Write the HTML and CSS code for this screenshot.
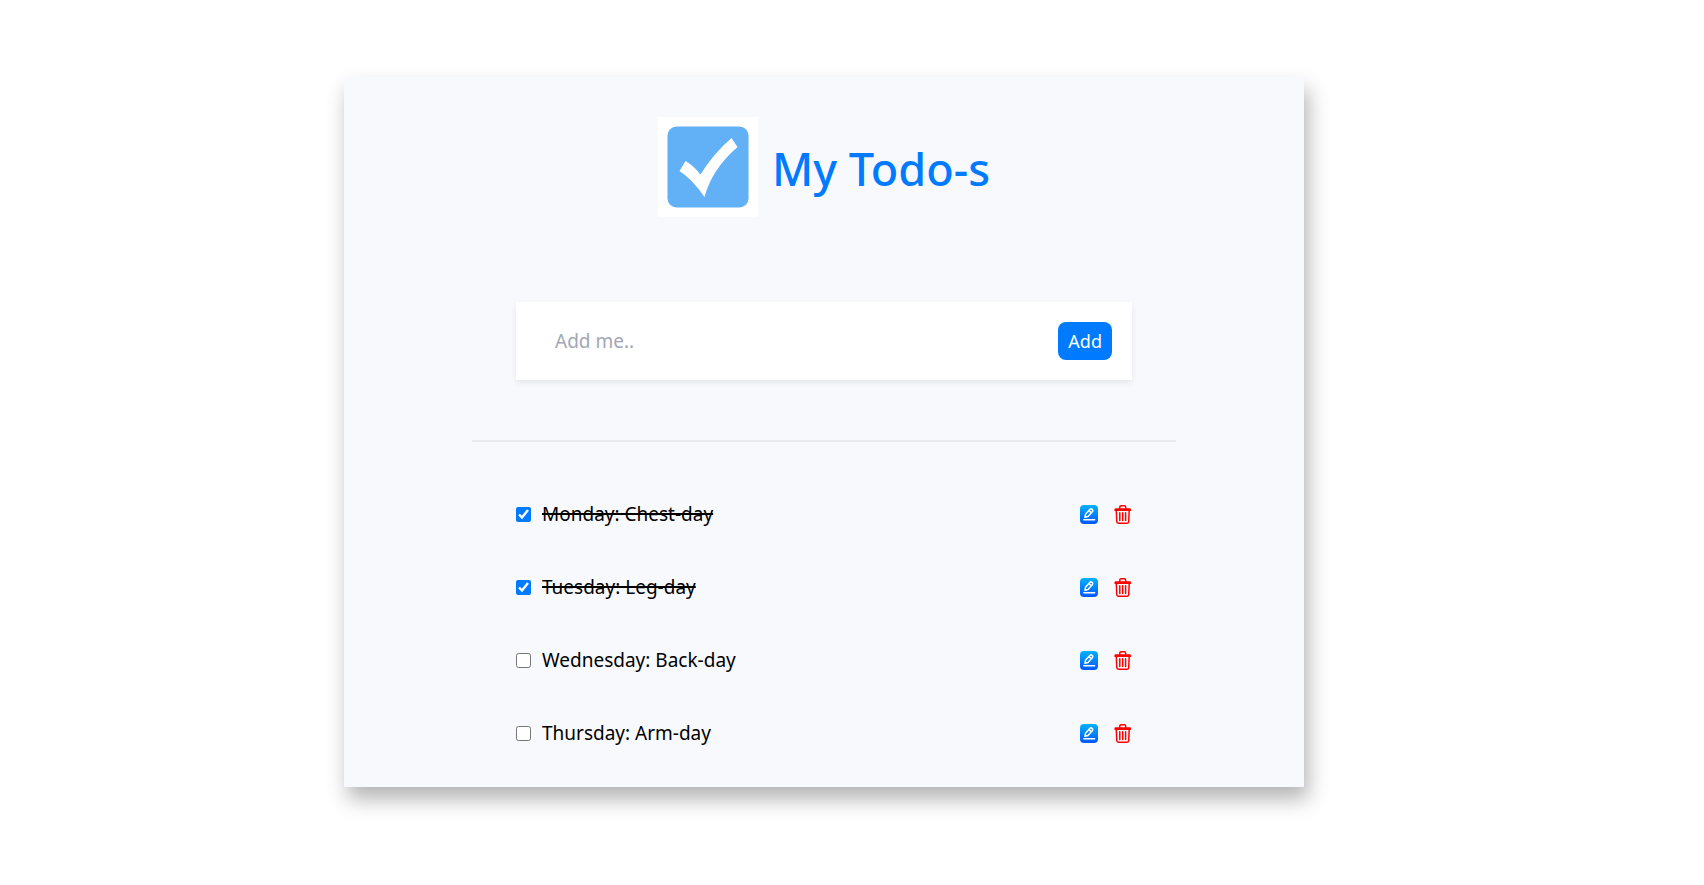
FILE: index.html
```html
<!DOCTYPE html>
<html lang="en">
<head>
<meta charset="utf-8">
<title>My Todo-s</title>
<link rel="stylesheet" href="styles.css">
</head>
<body>
<svg class="defs" width="0" height="0" aria-hidden="true">
  <defs>
    <linearGradient id="blue" x1="0" y1="0" x2="0" y2="1"><stop offset="0" stop-color="#00b2ff"/><stop offset="1" stop-color="#0057ff"/></linearGradient>
    <symbol id="edit" viewBox="0 0 18 19">
      <rect width="18" height="19" rx="4" fill="url(#blue)"/>
      <path d="M3.800 14.800h10.800" stroke="#fff" stroke-width="1.500" stroke-linecap="round"/>
      <path d="M4.900 12.300l.6-3L10 4.300q.9-.9 2.100.1 1.200 1 .4 2.100L8 11.600zM9 5.600l2.300 2.100" fill="none" stroke="#fff" stroke-width="1.500" stroke-linejoin="round"/>
    </symbol>
    <symbol id="trash" viewBox="0 0 18 19">
      <path d="M1.300 3.200q-.8.200-.8 1.400v1.400h16.500V4.600q0-1.200-.8-1.400z" fill="#f00"/>
      <path d="M5.800 3.500V2.200q0-1.400 1.400-1.400h3.100q1.400 0 1.400 1.400v1.300M2.300 5.500l.5 11.300q.1 1.400 1.500 1.400h8.900q1.400 0 1.500-1.400l.5-11.300M5.800 7.700v7.900M8.700 7.700v7.900M11.600 7.700v7.900" fill="none" stroke="#f00" stroke-width="1.500" stroke-linecap="round"/>
    </symbol>
  </defs>
</svg>
<main class="card">
  <header class="header">
    <svg class="logo" viewBox="0 0 100 100" aria-hidden="true">
      <rect width="100" height="100" fill="#fff"/>
      <rect x="9.500" y="9.500" width="81" height="81" rx="9" fill="#62b0f6"/>
      <path d="M73.500 21L79.500 30Q54 52 46.500 80Q35 63 21.500 54L27.500 44Q36 49 42.500 57.500Q55 37 73.500 21z" fill="#fff"/>
    </svg>
    <h1 class="title">My Todo-s</h1>
  </header>
  <form class="add-form">
    <input class="add-input" type="text" placeholder="Add me.." aria-label="New todo">
    <button class="add-button" type="button">Add</button>
  </form>
  <hr class="divider">
  <ul class="list">
    <li class="item">
      <input class="check" type="checkbox" id="t1" checked><label class="label" for="t1">Monday: Chest-day</label>
      <button class="icon" type="button" aria-label="Edit"><svg><use href="#edit"/></svg></button>
      <button class="icon" type="button" aria-label="Delete"><svg><use href="#trash"/></svg></button>
    </li>
    <li class="item">
      <input class="check" type="checkbox" id="t2" checked><label class="label" for="t2">Tuesday: Leg-day</label>
      <button class="icon" type="button" aria-label="Edit"><svg><use href="#edit"/></svg></button>
      <button class="icon" type="button" aria-label="Delete"><svg><use href="#trash"/></svg></button>
    </li>
    <li class="item">
      <input class="check" type="checkbox" id="t3"><label class="label" for="t3">Wednesday: Back-day</label>
      <button class="icon" type="button" aria-label="Edit"><svg><use href="#edit"/></svg></button>
      <button class="icon" type="button" aria-label="Delete"><svg><use href="#trash"/></svg></button>
    </li>
    <li class="item">
      <input class="check" type="checkbox" id="t4"><label class="label" for="t4">Thursday: Arm-day</label>
      <button class="icon" type="button" aria-label="Edit"><svg><use href="#edit"/></svg></button>
      <button class="icon" type="button" aria-label="Delete"><svg><use href="#trash"/></svg></button>
    </li>
  </ul>
</main>
</body>
</html>
```
FILE: styles.css
```css
* { box-sizing: border-box; }
body {
  margin: 0;
  padding: 77px 400px 77px 344px;
  background: #fff;
  color: #000;
  font-family: "Segoe UI", "Noto Sans", sans-serif;
  font-size: 19px;
}
.defs { position: absolute; }
.card {
  padding: 40px 128px;
  background: #f8f9fd;
  box-shadow: 4px 12px 20px rgba(0, 0, 0, 0.3);
}
.header {
  display: flex;
  justify-content: center;
  align-items: center;
  gap: 14px;
}
.logo { width: 100px; height: 100px; }
.title {
  margin: 4px 0 0;
  color: #007bff;
  font-size: 45px;
  font-weight: 500;
  line-height: 56px;
}
.add-form {
  display: flex;
  align-items: center;
  margin: 85px 44px 60px;
  padding: 20px 20px 20px 39px;
  background: #fff;
  box-shadow: 0 3px 6px rgba(0, 0, 0, 0.08);
}
.add-input {
  flex: 1;
  min-width: 0;
  padding: 0;
  border: 0;
  outline: 0;
  background: none;
  font: inherit;
}
.add-input::placeholder { color: #a2a7b4; }
.add-button {
  height: 38px;
  padding: 0 10px;
  border: 0;
  border-radius: 8px;
  background: #007bff;
  color: #fff;
  font: inherit;
  font-size: 18px;
}
.divider {
  height: 2px;
  margin: 0;
  border: 0;
  background: #e8e9ea;
}
.list {
  display: grid;
  gap: 45px;
  margin: 58px 44px 0;
  padding: 0;
  list-style: none;
}
.item {
  display: flex;
  align-items: center;
  height: 28px;
}
.check {
  width: 15px;
  height: 15px;
  margin: 0 11px 0 0;
  accent-color: #007bff;
}
.label { margin-right: auto; line-height: 28px; }
.check:checked + .label { text-decoration: line-through 2px; }
.icon {
  margin-left: 16px;
  padding: 0;
  border: 0;
  background: none;
}
.icon svg {
  display: block;
  width: 18px;
  height: 19px;
}
```
